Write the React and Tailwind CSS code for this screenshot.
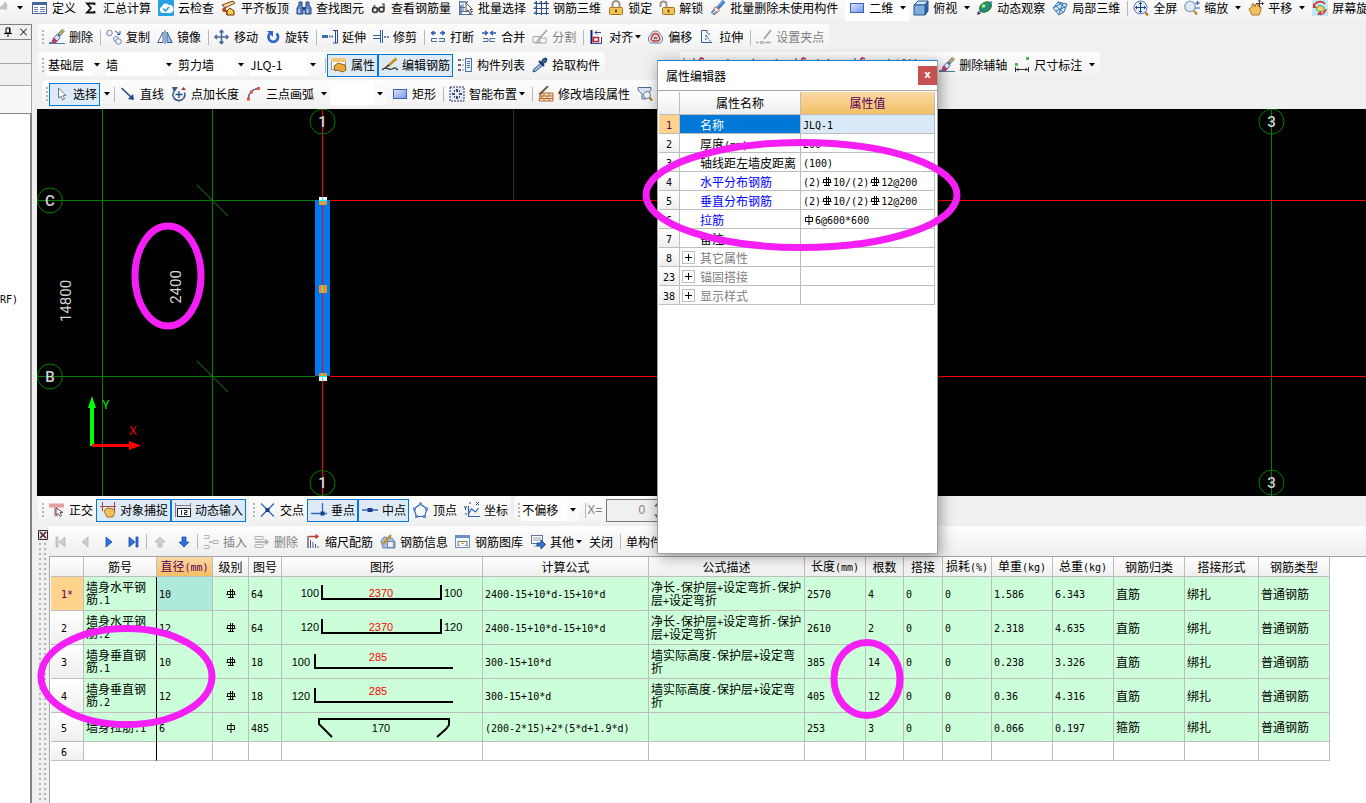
import React from "react";

const BLUE = "#2f5f9e";
const GREY = "#a8a8a8";

// 16x16 toolbar drawings
const ICONS = {
  define: (
    <>
      <rect x="0.500" y="2.500" width="14" height="11" fill="#fff" stroke="#44659c" />
      <path d="M0 2h15v3H0z" fill="#44659c" />
      <path d="M2 7.500h4M2 9.500h4M2 11.500h4M8 7.500h5M8 9.500h5M8 11.500h5" stroke="#6b86b5" />
    </>
  ),
  sum: <path d="M11.500 5V3.500H4L8 8l-4 4.500h7.500V11" fill="none" stroke="#111" strokeWidth="1.800" />,
  cloud: (
    <>
      <rect width="16" height="16" rx="1" fill="#2aa0e4" />
      <path d="M4 13a3.500 3.500 0 0 1 0-6.500A4 4 0 0 1 11 5a3.800 3.800 0 0 1 1 8z" fill="#fff" />
      <path d="M5 8.500l2.500 2.500L11 7" fill="none" stroke="#2aa0e4" strokeWidth="1.600" />
    </>
  ),
  slab: (
    <>
      <path d="M1 5l11-4 2 2L4 8z" fill="#f7d9a8" stroke="#7a3b12" />
      <path d="M1 9l4-3v4h8v5H5v-3H2z" fill="#b04a20" />
      <path d="M6 11l3-3 4 3v4H6z" fill="#ffd23f" stroke="#6e2b0c" />
    </>
  ),
  find: (
    <>
      <path d="M3 2h3v4l1 2v6H1V8l2-3zM10 2h3v3l2 3v6H9V8l1-2z" fill="#5d83c2" stroke="#25467e" />
      <path d="M6.500 7h3v3h-3z" fill="#25467e" />
      <path d="M3 9v4M11.500 9v4" stroke="#c8d9f3" strokeWidth="1.500" />
    </>
  ),
  glasses: (
    <>
      <circle cx="4" cy="10" r="2.500" fill="#dfe8f2" stroke="#333" strokeWidth="1.600" />
      <circle cx="10.500" cy="9.500" r="2.500" fill="#dfe8f2" stroke="#333" strokeWidth="1.600" />
      <path d="M6.500 9.500h1.500M1.500 9L4 5M13 8.500V4h-2" fill="none" stroke="#333" strokeWidth="1.200" />
    </>
  ),
  batch: (
    <>
      <path d="M1 1h9v2H1zM1 5h3v10H1z" fill="#7b93bd" />
      <path d="M1.500 1v14M5 4v8M1 7.500h6M1 11.500h14M1 14.500h14" stroke="#5a7199" />
      <path d="M8 3v9l2-2 2 4 1.500-1L12 9.500h2.500z" fill="#fff" stroke="#555" />
    </>
  ),
  rebar3d: <path d="M1 3.500h15M1 8.500h15M1 13.500h15M3.500 1v14M8.500 1v14M13.500 1v14M1 3.500L3.500 1M6 3.500L8.500 1M11 3.500L13.500 1M1 8.500l2.500-3M1 13.500l2.500-3" fill="none" stroke="#2c4d86" />,
  lock: (
    <>
      <path d="M4.500 8V4.500a3.500 3.500 0 0 1 7 0V8" fill="none" stroke="#9a958a" strokeWidth="2" />
      <rect x="1.500" y="7.500" width="13" height="7" rx="1" fill="#f2c45a" stroke="#a9751c" />
      <path d="M8 9.500v3" stroke="#5d3d08" strokeWidth="1.600" />
    </>
  ),
  unlock: (
    <>
      <path d="M1.500 7V4.500a3 3 0 0 1 6 0V8" fill="none" stroke="#9a958a" strokeWidth="2" />
      <rect x="3.500" y="7.500" width="12" height="7" rx="1" fill="#f2c45a" stroke="#a9751c" />
      <path d="M9.500 9.500v3" stroke="#5d3d08" strokeWidth="1.600" />
    </>
  ),
  brush: (
    <>
      <path d="M14.500 1L9 7" stroke="#3c6fb5" strokeWidth="3.400" />
      <path d="M14.500 1L10.500 5.500" stroke="#d9a640" strokeWidth="2.200" />
      <path d="M8 5.500l3 3-3 4-4-3z" fill="#dfe9f5" stroke="#4a6a99" />
      <path d="M5 8.500l3.500 3.500-1.500 2H4l-1.500-2z" fill="#b8397a" />
      <path d="M0 13.500h4M0 14.500h16" stroke="#5a779f" />
    </>
  ),
  broom: (
    <>
      <path d="M14 1L8 8" stroke="#3777c8" strokeWidth="3.500" />
      <path d="M13.500 1L9 6" stroke="#9cc3ee" />
      <path d="M5.500 6.500l4 4-5 4-3-2z" fill="#f4ece6" stroke="#c65a44" />
      <path d="M1 13l4-3M3 14.500l4-3" stroke="#4a8ad8" strokeWidth="1.400" />
    </>
  ),
  rect: (
    <>
      <defs>
        <linearGradient id="rectFill" x1="0" y1="0" x2="1" y2="1">
          <stop offset="0" stopColor="#dbe6fb" />
          <stop offset="1" stopColor="#7197ec" />
        </linearGradient>
      </defs>
      <rect x="1.500" y="3.500" width="13" height="9" fill="url(#rectFill)" stroke="#3f62b8" />
    </>
  ),
  cube: (
    <>
      <path d="M1 5l4-4h10l-3 4z" fill="#cfe2f7" stroke="#27548c" />
      <path d="M12 5l3-4v10l-3 4z" fill="#2c62a6" stroke="#27548c" />
      <path d="M1 5h11v10H1z" fill="#82aede" stroke="#27548c" />
    </>
  ),
  orbit: (
    <>
      <path d="M0 15l1-4 3 2.500z" fill="#5c2d2d" />
      <ellipse cx="8.500" cy="7" rx="6.500" ry="4.500" transform="rotate(-35 8.500 7)" fill="#27a04b" stroke="#146b2e" />
      <circle cx="6.500" cy="6" r="1.800" fill="#a8efb9" />
      <path d="M2 13c2-4 5-2 8-5s3-5 5-6.500" fill="none" stroke="#2e6fc0" strokeWidth="1.300" />
    </>
  ),
  part3d: (
    <>
      <path d="M1 8l5-6 9 2-3 8-5 3z" fill="#d5e7f7" stroke="#2e74b5" />
      <path d="M3.500 5.500l8 7M6 2l8 6M1 8l8-4.500M7 14l4-11M4 11l9-4" fill="none" stroke="#2e74b5" />
    </>
  ),
  full: (
    <>
      <circle cx="7.500" cy="7.500" r="6.500" fill="#e2ecfa" stroke="#5375ad" />
      <path d="M7.500 2.500v10M2.500 7.500h10M6 4l1.500-1.500L9 4M6 11l1.500 1.500L9 11M4 6L2.500 7.500 4 9M11 6l1.500 1.500L11 9" fill="none" stroke="#1f3f7d" />
      <path d="M12.500 12.500l2.500 3" stroke="#b87a2a" strokeWidth="2.500" />
    </>
  ),
  zoom: (
    <>
      <circle cx="6" cy="6.500" r="5.200" fill="#dfeaf6" stroke="#9aabc3" strokeWidth="1.500" />
      <path d="M10 11l3 3.500" stroke="#c08a3a" strokeWidth="2.500" />
      <path d="M13.500 1v4M11 3h5M11 8h5" stroke="#2d5fa6" strokeWidth="1.200" />
    </>
  ),
  pan: (
    <>
      <path d="M1 9l3-2V4h2l1 3 1-3h2l1 3h2v3l-2 5H4z" fill="#efc060" stroke="#a87422" />
      <path d="M11.500 0v7M8 3.500h7.500M10 1.500L11.500 0 13 1.500M14 2l1.500 1.500L14 5" fill="none" stroke="#444" />
    </>
  ),
  spin: (
    <>
      <rect width="16" height="16" fill="#bfe9f7" />
      <path d="M4 9l3-4 5 2v4l-5 1z" fill="#e7d36b" stroke="#5da05b" />
      <path d="M2 7a6.200 6.200 0 0 1 11-3M14 9a6.200 6.200 0 0 1-8 5" fill="none" stroke="#e0322c" strokeWidth="1.600" />
      <path d="M1 3v5h4zM9 11v4.500L5 14z" fill="#e0322c" />
    </>
  ),
  copy: (
    <>
      <circle cx="3.500" cy="4" r="2.800" fill="#eef2f8" stroke="#6d87ab" />
      <circle cx="10" cy="10" r="2.500" fill="#eef2f8" stroke="#6d87ab" />
      <circle cx="12.500" cy="12.500" r="2.800" fill="#eef2f8" stroke="#6d87ab" />
      <path d="M9 2l5 3M14 2v3.500h-3" fill="none" stroke={BLUE} />
    </>
  ),
  mirror: (
    <>
      <path d="M6 3v10.500H.800z" fill="#fff" stroke={BLUE} />
      <path d="M10 3v10.500h5.200z" fill="#9cbbe6" stroke={BLUE} />
      <path d="M8 1v14" stroke={BLUE} />
    </>
  ),
  move: (
    <path d="M7.500 1.500v13M1 8h13M5.500 3.500l2-2 2 2M5.500 12.500l2 2 2-2M3 6L1 8l2 2M12 6l2 2-2 2" fill="none" stroke="#4a6a9c" strokeWidth="1.600" />
  ),
  rotate: (
    <>
      <path d="M5 4.500a4.800 4.800 0 1 0 6.500 0" fill="none" stroke="#2f68c8" strokeWidth="2.800" />
      <path d="M2 2h6v6z" fill="#2f68c8" />
    </>
  ),
  extend: (
    <>
      <path d="M0 6h6v3H0z" fill="#3b6cae" />
      <path d="M7 7.500h5" stroke="#3b6cae" strokeWidth="2" strokeDasharray="1.500 1" />
      <path d="M13.500 1v13M15.500 1v13" stroke="#1f4f94" />
      <path d="M11 1.500h4.500M11 14h4.500" stroke="#1f4f94" />
    </>
  ),
  trim: (
    <>
      <path d="M0 6.500h7M0 9.500h7" stroke={BLUE} />
      <path d="M7.500 1v13M9.500 1v13" stroke={BLUE} />
      <path d="M11 8h5" stroke={BLUE} strokeWidth="1.500" strokeDasharray="2 1" />
    </>
  ),
  break: (
    <>
      <path d="M1 4h5M10 4h5M4 2L1.500 4 4 6M12 2l2.500 2L12 6" fill="none" stroke="#2c5bb5" strokeWidth="1.300" />
      <path d="M7 9.500H1.500v3H7M9 9.500h5.500v3H9" fill="none" stroke="#4a6a99" />
    </>
  ),
  merge: (
    <>
      <path d="M1 4h5M10 4h5M4 2l2.500 2L4 6M12 2L9.500 4 12 6" fill="none" stroke="#2c5bb5" strokeWidth="1.300" />
      <path d="M2 9.500h5v3H2M14 9.500H9v3h5" fill="none" stroke="#4a6a99" />
    </>
  ),
  split: (
    <>
      <path d="M1 7.500h7v6H1zM9 9h5v5H3" fill="none" stroke={GREY} />
      <path d="M15 1L7 10l-2 3" fill="none" stroke={GREY} strokeWidth="1.800" />
    </>
  ),
  align: (
    <>
      <path d="M2.500 1v14" stroke="#111f70" strokeWidth="2" />
      <path d="M6 3.500h6M8 1.500l-2 2 2 2" fill="none" stroke="#2c3fa8" />
      <path d="M4.500 8.500h5v4h-5z" fill="#fff" stroke="#c02030" strokeWidth="1.500" />
      <path d="M4 14.500h8.500V8" fill="none" stroke="#2c3fa8" />
    </>
  ),
  offset: (
    <>
      <path d="M7.500 2c4 0 4 3 6 5s1 7-2 7h-8c-3 0-4-5-2-7s2-5 6-5z" fill="#e8eef7" stroke="#5a779f" />
      <path d="M7.500 4.500c3 0 3 2 4 4s0 3.500-2 3.500h-4c-2 0-3-1.500-2-3.500s1-4 4-4z" fill="#f4cdc9" stroke="#c23a33" strokeWidth="1.400" />
      <path d="M5.500 10c0-3 4-3 4 0z" fill="#5a779f" />
    </>
  ),
  stretch: (
    <>
      <path d="M8 1.500H2.500v12H13M8 1.500v3" fill="none" stroke={BLUE} />
      <path d="M7 6l5 7M7 6v6M9 5h2" fill="none" stroke={BLUE} strokeDasharray="2 1" />
    </>
  ),
  grip: (
    <>
      <path d="M0 13.500h3M9 13.500h6" stroke={GREY} strokeWidth="1.500" />
      <path d="M4 12h4v3H4z" fill="#bdbdbd" />
      <path d="M15 1L8 10" stroke={GREY} strokeWidth="2" />
    </>
  ),
  props: (
    <>
      <rect x="0.500" y="1.500" width="14" height="11" fill="#fff" stroke="#8e98a8" />
      <path d="M0 1h15v4H0z" fill="#f2c879" />
      <path d="M3 9l4-3 7 2 1 5-4 2-4-2-3 1z" fill="#e7a93c" stroke="#8c6018" />
    </>
  ),
  editRebar: (
    <>
      <path d="M0 13c4-5 6 1 10-1s3-1 6 1" fill="none" stroke="#333" strokeWidth="1.300" />
      <path d="M14.500 1.500L6 9" stroke="#c98f2c" strokeWidth="2.800" />
      <path d="M7 8l-4 3" stroke="#333" strokeWidth="1.500" />
    </>
  ),
  list: (
    <>
      <path d="M1 2h3v2H1zM1 7h3v2H1zM1 12h3v2H1z" fill="#667" />
      <path d="M5 3h2M5 8h2M5 13h2" stroke="#889" />
      <rect x="8.500" y="1.500" width="6" height="13" fill="#e8f0fb" stroke="#4e77ba" />
      <path d="M10 4.500h3M10 6.500h3M10 8.500h3M10 10.500h3" stroke="#4e77ba" />
    </>
  ),
  pick: (
    <>
      <path d="M9 6l-7 6-1 3 3-1 7-6" fill="#8fc0ee" stroke="#31547f" />
      <path d="M7 4l5 5" stroke="#16335c" strokeWidth="2.200" />
      <path d="M9 6l2-4 3-1 1 1-1 3-4 2z" fill="#2f63b5" stroke="#16335c" />
    </>
  ),
  cursor: <path d="M5.500 2v10l2.500-2 1.500 4 2-1-1.500-3.500h3z" fill="#fff" stroke="#6d7b8e" />,
  line: (
    <>
      <path d="M1.500 2l10 9.500" stroke="#23478a" strokeWidth="1.600" />
      <path d="M14 14l-6-1 5-5z" fill="#23478a" />
    </>
  ),
  addLen: (
    <>
      <path d="M2.500 6a6 6 0 1 0 11 .500" fill="none" stroke="#3b5b8c" strokeWidth="1.600" />
      <path d="M1 1h6l-4 6z" fill="#3b5b8c" />
      <path d="M8 5v7M4.500 8.500h7" stroke="#23478a" strokeWidth="1.300" />
      <path d="M10 4h5l-2.500-3z" fill="#a33" />
    </>
  ),
  arc: (
    <>
      <path d="M2.500 14C2 7 6 3 13 2.500" fill="none" stroke="#6b5f8a" strokeWidth="1.500" />
      <path d="M1 11.500h3v3H1zM4 4.500h3v3H4zM11 1h3v3h-3z" fill="#df5a3e" />
    </>
  ),
  smart: (
    <>
      <rect x="1" y="1" width="14" height="14" fill="#dfe9fa" stroke="#334" strokeDasharray="2 1" />
      <path d="M8 3v3M8 10v3M3 8h3M10 8h3M5 5h1M10 5h1M5 11h1M10 11h1" stroke="#223" strokeWidth="1.600" />
    </>
  ),
  wall: (
    <>
      <path d="M3 7h12v8H1z" fill="#fbe3cb" stroke="#b5692e" />
      <path d="M1 10h14M1 12.500h14M6 7v3M11 7v3M4 10v2.500M9 10v2.500M6 12.500V15M11 12.500V15" stroke="#b5692e" />
      <path d="M10 0L3 7l-2 1" fill="none" stroke="#5d5a3c" strokeWidth="1.800" />
    </>
  ),
  filter: (
    <>
      <path d="M1 1.500h13v3L9 8v5H5V8L1 4z" fill="#d8e4f5" stroke="#4e6b9b" />
      <circle cx="10" cy="9" r="3.500" fill="#eef5fc" stroke="#6b7f9c" />
      <path d="M12.500 11.500l2.500 3" stroke="#b87a2a" strokeWidth="2.400" />
    </>
  ),
  axis: <path d="M2 14L13 2M2 5h12" stroke="#2d3f9c" strokeWidth="1.200" />,
  axisRed: (
    <>
      <path d="M4 1v14" stroke="#2d3f9c" />
      <path d="M8 5l3-4 3 1" fill="none" stroke="#b03040" strokeWidth="1.500" />
    </>
  ),
  dim: (
    <>
      <path d="M1 6h3v3H1zM12 0h3v3h-3z" fill="#4fb85a" />
      <path d="M1.500 10v5M14.500 10v5M2 12.500h12M4 11v3M12 11v3" stroke="#333" />
    </>
  ),
  ortho: (
    <>
      <path d="M0 1.500h15v4H9v9H5v-9H0z" fill="#e2a0a0" />
      <path d="M7 6v7l2-1.500 2 3 1.500-1L11 10.500h3z" fill="#fff" stroke="#555" />
    </>
  ),
  snap: (
    <>
      <path d="M2.500 0v9M14.500 0v9M0 4.500h16" stroke="#a34a3c" />
      <path d="M4 9l3-3 6 1 2 3-2 5H7z" fill="#efc060" stroke="#a87422" />
    </>
  ),
  dyn: (
    <>
      <path d="M.500 1v14M15.500 1v4M1 3.500h14" stroke="#8d7a7a" />
      <rect x="2.500" y="6.500" width="13" height="8" fill="#fff" stroke="#222" />
      <path d="M6.500 8v5M9 8.500h3v2H9.500v2h3" fill="none" stroke="#222" />
    </>
  ),
  cross: (
    <>
      <path d="M1 1.500l13 13M14 1.500l-13 13" stroke="#2f68b8" strokeWidth="1.300" />
      <path d="M5.500 6h4v4h-4z" fill="#153f86" />
    </>
  ),
  perp: (
    <>
      <path d="M11.500 1v10M0 11.500h16" stroke="#2f68b8" strokeWidth="1.300" />
      <path d="M9.500 9.500h4v4h-4z" fill="#153f86" />
    </>
  ),
  mid: (
    <>
      <path d="M0 8h16" stroke="#2f68b8" strokeWidth="1.500" />
      <path d="M5.500 6h5v4h-5z" fill="#153f86" />
    </>
  ),
  vertex: (
    <>
      <path d="M7.500 2L14 7l-2.500 7.500h-8L1 7z" fill="#fff" stroke="#2f68b8" strokeWidth="1.200" />
      <path d="M6 .500h3v3H6zM0 5.500h3v3H0zM12 5.500h3v3h-3zM2 13h3v3H2zM10 13h3v3h-3z" fill="#5b90d6" />
    </>
  ),
  coord: (
    <>
      <path d="M4.500 4v10.500H16M4.500 12l3-5 4 3 3-4" fill="none" stroke="#2f68b8" strokeWidth="1.200" />
      <path d="M0 4l1.500 2L3 4M1.500 6v2M12 0l3 3M15 0l-3 3M1 12h2M6 0v2" fill="none" stroke="#23478a" />
    </>
  ),
  insert: (
    <>
      <path d="M1 1.500h5v3H1M1 11.500h5v3H1M10 6.500h5v3h-5z" fill="#f2f2f2" stroke="#b5b5b5" />
      <path d="M9 8H6" stroke={GREY} strokeWidth="1.500" />
    </>
  ),
  remove: (
    <>
      <path d="M1 2.500h8v3H1zM1 10.500h8v3H1z" fill="#f2f2f2" stroke="#b5b5b5" />
      <path d="M1 8h12M11 5.500L14 8l-3 2.500" fill="none" stroke={GREY} strokeWidth="1.300" />
    </>
  ),
  scale: (
    <>
      <path d="M3 2v12" stroke="#222" />
      <path d="M4 2.500h9M10.500.500l2.500 2-2.500 2" fill="none" stroke="#c0392b" strokeWidth="1.300" />
      <path d="M5.500 6v8M8 8v6M10.500 10v4M13 12v2" stroke="#4a5f86" />
    </>
  ),
  info: (
    <>
      <path d="M1 7l3-4 8 1 3 4v6H3z" fill="#a9bfe2" stroke="#6a86b8" />
      <rect x="7.500" y="7.500" width="6" height="6" fill="#eef3fb" stroke="#6a86b8" />
      <path d="M11 1L3 10" stroke="#c98f2c" strokeWidth="2.500" />
    </>
  ),
  gallery: (
    <>
      <rect x="0.500" y="1.500" width="14" height="12" fill="#f4f8fd" stroke="#6b8fc9" />
      <path d="M0 1h15v3H0z" fill="#6b8fc9" />
      <path d="M3 11V7.500h9V11M2.500 11.500h2M10.500 11.500h2" fill="none" stroke="#777" />
      <path d="M6 9.500h3" stroke="#d9a640" />
    </>
  ),
  other: (
    <>
      <rect x="1.500" y="1.500" width="11" height="8" fill="#fff" stroke="#65748f" />
      <path d="M3 4h8M3 6h8M4 12h4" stroke="#8a99b5" />
      <path d="M7 9h4V6l4.500 4.500L11 15v-3H7z" fill="#3873cf" stroke="#1e4c97" />
    </>
  ),
};

const Icon = ({ name }) => (
  <svg width="16" height="16" viewBox="0 0 16 16" className="shrink-0" aria-hidden="true">
    {ICONS[name]}
  </svg>
);

const Caret = () => (
  <svg width="6" height="4" viewBox="0 0 6 4" className="shrink-0" aria-hidden="true">
    <path d="M0 0h6L3 3.500z" fill="#000" />
  </svg>
);

const Tool = ({ icon, label, active, disabled, menu }) => (
  <button
    type="button"
    disabled={disabled}
    className={
      "flex h-[23px] shrink-0 items-center gap-1 border pl-[3px] pr-0.5 whitespace-nowrap " +
      (active ? "border-[#0078d7] bg-[#deebf7] " : "border-transparent ") +
      (disabled ? "text-[#808080]" : "text-black")
    }
  >
    {icon && <Icon name={icon} />}
    <span className="flex items-center gap-0.5">
      {label}
      {menu && <Caret />}
    </span>
  </button>
);

const Drop = ({ label }) => (
  <button type="button" aria-label={label} className="flex h-[23px] shrink-0 items-center pl-1 pr-[3px]">
    <Caret />
  </button>
);

const Sep = () => <span className="ml-1 mr-px h-[15px] w-px shrink-0 bg-[#b8b8b8]" />;

const Grip = () => (
  <span className="flex shrink-0 flex-col gap-0.5 pr-px" aria-hidden="true">
    <i className="size-0.5 bg-[#b5b5b5]" />
    <i className="size-0.5 bg-[#b5b5b5]" />
    <i className="size-0.5 bg-[#b5b5b5]" />
    <i className="size-0.5 bg-[#b5b5b5]" />
  </span>
);

const Bar = ({ children, className = "" }) => (
  <div
    className={
      "flex h-full shrink-0 items-center rounded-sm bg-linear-to-b from-[#fdfdfd] to-[#f1f1f1] pl-1 " + className
    }
  >
    <Grip />
    {children}
  </div>
);

const Select = ({ label, value, width }) => (
  <div className={"relative mr-0.5 flex h-[22px] shrink-0 items-center bg-white " + width}>
    <select aria-label={label} className="h-full w-full appearance-none bg-transparent pl-px pr-3 text-xs outline-none">
      <option>{value}</option>
    </select>
    <span className="pointer-events-none absolute inset-y-0 right-0 flex w-3 items-center justify-center bg-[#fafafa]">
      <Caret />
    </span>
  </div>
);

// Grade symbol of a bar: HRB400 has the double stem and base, HPB300 the single one
const Grade = ({ level }) => (
  <svg
    width="12"
    height="12"
    viewBox="0 0 12 12"
    className="inline-block align-[-2px]"
    role="img"
    aria-label={level === 3 ? "HRB400" : "HPB300"}
  >
    {level === 3 ? (
      <path d="M2.500 3.500h7v3h-7zM5.500 1v9M7.500 1v9M1.500 6.500h9M3 9.500h6" fill="none" stroke="#000" />
    ) : (
      <path d="M2.500 3.500h7v4h-7zM6 1v10" fill="none" stroke="#000" />
    )}
  </svg>
);

// Half-width characters go in the mono face, Chinese in the full-width one; # and $ stand for bar grades
const Mixed = ({ text }) =>
  text.split(/([\u4e00-\u9fff]+|[#$])/).map((part, i) => {
    if (part === "#") return <Grade key={i} level={3} />;
    if (part === "$") return <Grade key={i} level={1} />;
    if (part === "" || /[\u4e00-\u9fff]/.test(part)) return part;
    return (
      <span key={i} className="font-['DejaVu_Sans_Mono','Liberation_Mono',monospace] text-[10px] leading-none">
        {part}
      </span>
    );
  });

const Bubble = ({ x, y, label }) => (
  <>
    <circle cx={x} cy={y} r="12.500" fill="none" stroke="#008000" />
    <text x={x} y={y + 5} textAnchor="middle" fontSize="15" fontWeight="500" fill="#d4d4d4">
      {label}
    </text>
  </>
);

const Drawing = () => (
  <svg
    className="block h-[387px] w-full bg-black font-[Roboto,sans-serif]"
    role="img"
    aria-label="绘图区"
  >
    <g stroke="#008000" shapeRendering="crispEdges">
      <path d="M65.500 0v387M175.500 0v387M1234.500 0v387" />
      <path d="M0 91.500h278M0 267.500h278" />
      <path d="M160 76l31 31M160 252l31 31" />
    </g>
    <path d="M476.500 0v91" stroke="#262e26" />
    <rect x="278" y="91" width="15" height="176" fill="#0078f0" />
    <g stroke="#f00" shapeRendering="crispEdges">
      <path d="M285.500 0v387" />
      <line x1="293" y1="91.500" x2="100%" y2="91.500" />
      <line x1="293" y1="267.500" x2="100%" y2="267.500" />
    </g>
    <path d="M282 88h8v4h-8zM282 268h8v4h-8z" fill="#fff" />
    <path d="M282 92h8v4h-8zM282 264h8v4h-8zM282 176h8v8h-8z" fill="#ff8c1a" />
    <path d="M285.500 88v8M285.500 176v8M285.500 264v8M282 91.500h8M282 267.500h8" stroke="#0ff" />
    <Bubble x={285.5} y={12.5} label="1" />
    <Bubble x={285.5} y={374} label="1" />
    <Bubble x={13} y={91.5} label="C" />
    <Bubble x={13} y={267.5} label="B" />
    <Bubble x={1234.5} y={12.5} label="3" />
    <Bubble x={1234.5} y={373.5} label="3" />
    <g fontSize="15" fill="#d4d4d4" textAnchor="middle">
      <text transform="translate(34 192) rotate(-90)">14800</text>
      <text transform="translate(144 178) rotate(-90)">2400</text>
    </g>
    <path d="M53 337V299h-2l4-12 4 12h-2v38z" fill="#0f0" />
    <path d="M55 335h37v-3l12 4.500-12 4.500v-3H55z" fill="#f00" />
    <g fontSize="13" textAnchor="middle" className="font-['Open_Sans',sans-serif]">
      <text x="69" y="300" fill="#0f0">Y</text>
      <text x="96" y="326" fill="#f00">X</text>
    </g>
  </svg>
);

const UShape = ({ left, length, right }) => (
  <svg width="200" height="32" viewBox="0 0 200 32" className="block" role="img" aria-label={`${left} ${length} ${right}`}>
    <path d="M40 7v14h119V7" fill="none" stroke="#000" strokeWidth="2" />
    <g fontSize="11">
      <text x="37" y="19" textAnchor="end">{left}</text>
      <text x="99" y="19" textAnchor="middle" fill="#f00">{length}</text>
      <text x="162" y="19">{right}</text>
    </g>
  </svg>
);

const LShape = ({ left, length }) => (
  <svg width="200" height="32" viewBox="0 0 200 32" className="block" role="img" aria-label={`${left} ${length}`}>
    <path d="M33 8v14h138" fill="none" stroke="#000" strokeWidth="2" />
    <g fontSize="11">
      <text x="28" y="20" textAnchor="end">{left}</text>
      <text x="96" y="15" textAnchor="middle" fill="#f00">{length}</text>
    </g>
  </svg>
);

const TieShape = ({ length }) => (
  <svg width="200" height="28" viewBox="0 0 200 28" className="block" role="img" aria-label={length}>
    <path d="M50 24L37 11v-5h130V12l-3 4-9 8" fill="none" stroke="#000" strokeWidth="2" />
    <text x="99" y="19" textAnchor="middle" fontSize="11">{length}</text>
  </svg>
);

const COLUMNS = [
  ["", "w-[33px]"],
  ["筋号", "w-[73px]"],
  ["直径(mm)", "w-[56px]"],
  ["级别", "w-[36px]"],
  ["图号", "w-[33px]"],
  ["图形", "w-[201px]"],
  ["计算公式", "w-[166px]"],
  ["公式描述", "w-[156px]"],
  ["长度(mm)", "w-[61px]"],
  ["根数", "w-[38px]"],
  ["搭接", "w-[39px]"],
  ["损耗(%)", "w-[49px]"],
  ["单重(kg)", "w-[61px]"],
  ["总重(kg)", "w-[61px]"],
  ["钢筋归类", "w-[71px]"],
  ["搭接形式", "w-[74px]"],
  ["钢筋类型", "w-[71px]"],
];

const ROWS = [
  ["1*", "墙身水平钢筋.1", "10", "#", "64", <UShape left="100" length="2370" right="100" />, "2400-15+10*d-15+10*d", "净长-保护层+设定弯折-保护层+设定弯折", "2570", "4", "0", "0", "1.586", "6.343", "直筋", "绑扎", "普通钢筋"],
  ["2", "墙身水平钢筋.2", "12", "#", "64", <UShape left="120" length="2370" right="120" />, "2400-15+10*d-15+10*d", "净长-保护层+设定弯折-保护层+设定弯折", "2610", "2", "0", "0", "2.318", "4.635", "直筋", "绑扎", "普通钢筋"],
  ["3", "墙身垂直钢筋.1", "10", "#", "18", <LShape left="100" length="285" />, "300-15+10*d", "墙实际高度-保护层+设定弯折", "385", "14", "0", "0", "0.238", "3.326", "直筋", "绑扎", "普通钢筋"],
  ["4", "墙身垂直钢筋.2", "12", "#", "18", <LShape left="120" length="285" />, "300-15+10*d", "墙实际高度-保护层+设定弯折", "405", "12", "0", "0", "0.36", "4.316", "直筋", "绑扎", "普通钢筋"],
  ["5", "墙身拉筋.1", "6", "$", "485", <TieShape length="170" />, "(200-2*15)+2*(5*d+1.9*d)", "", "253", "3", "0", "0", "0.066", "0.197", "箍筋", "绑扎", "普通钢筋"],
  ["6", "", "", "", "", "", "", "", "", "", "", "", "", "", "", "", ""],
];

const ROW_HEIGHTS = ["h-[34px]", "h-[34px]", "h-[34px]", "h-[34px]", "h-[29px]", "h-[19px]"];

const bodyCell = (r, c) => {
  let cls = "overflow-hidden border-b border-r border-b-[#bdbdbd] p-0 align-middle ";
  cls += c === 1 ? "border-r-black " : "border-r-[#bdbdbd] ";
  if (c === 0) {
    cls += "pl-2.5 text-left font-normal ";
    return cls + (r === 0 ? "bg-[#ffd38c] text-[#5a005a]" : "bg-linear-to-b from-white to-[#efefef]");
  }
  if (c === 3) cls += "text-center ";
  else if (c !== 5) cls += "pl-0.5 ";
  if (r === 0 && c === 2) return cls + "bg-[#aeeada]";
  return cls + (r < 5 ? "bg-[#ccffd9]" : "bg-white");
};

const RebarTable = () => (
  <table className="w-[1279px] table-fixed border-separate border-spacing-0 text-xs leading-3">
    <thead>
      <tr className="h-5">
        {COLUMNS.map(([name, width], c) => (
          <th
            key={c}
            scope="col"
            className={
              "border-b border-r border-[#bdbdbd] p-0 text-center font-normal whitespace-nowrap " +
              width +
              (c === 2
                ? " bg-linear-to-b from-[#f9d9a4] to-[#f3bf63] text-[#5a005a]"
                : " bg-linear-to-b from-white to-[#efefef]")
            }
          >
            <Mixed text={name} />
          </th>
        ))}
      </tr>
    </thead>
    <tbody>
      {ROWS.map((row, r) => (
        <tr key={r} className={ROW_HEIGHTS[r]}>
          {row.map((cell, c) => {
            const Cell = c === 0 ? "th" : "td";
            return (
              <Cell key={c} scope={c === 0 ? "row" : undefined} className={bodyCell(r, c)}>
                {typeof cell === "string" ? <Mixed text={cell} /> : <div className="font-['Liberation_Sans',sans-serif]">{cell}</div>}
              </Cell>
            );
          })}
        </tr>
      ))}
    </tbody>
  </table>
);

const PROPS = [
  { no: "1", name: "名称", value: "JLQ-1" },
  { no: "2", name: "厚度(mm)", value: "200" },
  { no: "3", name: "轴线距左墙皮距离", value: "(100)" },
  { no: "4", name: "水平分布钢筋", value: "(2)#10/(2)#12@200", key: true },
  { no: "5", name: "垂直分布钢筋", value: "(2)#10/(2)#12@200", key: true },
  { no: "6", name: "拉筋", value: "$6@600*600", key: true },
  { no: "7", name: "备注", value: "" },
  { no: "8", name: "其它属性", value: "", group: true },
  { no: "23", name: "锚固搭接", value: "", group: true },
  { no: "38", name: "显示样式", value: "", group: true },
];

const propColor = (p, i) => {
  if (i === 0) return "bg-[#0078d7] text-white";
  if (p.key) return "text-[#0000ff]";
  if (p.group) return "text-[#808080]";
  return "text-black";
};

const PropertyEditor = () => (
  <section
    aria-label="属性编辑器"
    className="absolute left-[657px] top-[60px] flex h-[494px] w-[281px] flex-col border border-[#a0a0a0] border-t-[#1883d7] bg-white shadow-[2px_3px_14px_rgba(0,0,0,0.4)]"
  >
    <header className="flex h-[30px] shrink-0 items-center justify-between border-b border-[#a8a8a8] pl-2">
      <h2>属性编辑器</h2>
      <button
        type="button"
        aria-label="关闭"
        className="size-[19px] bg-[#c75050] pb-0.5 font-['DejaVu_Sans',sans-serif] text-[10px] font-bold text-white"
      >
        x
      </button>
    </header>
    <table className="ml-px mt-px w-[276px] table-fixed border-separate border-spacing-0 leading-3">
      <thead>
        <tr className="h-[23px]">
          <th className="w-[21px] border-b border-r border-[#bdbdbd] bg-linear-to-b from-white to-[#efefef] p-0" />
          <th scope="col" className="w-[121px] border-b border-r border-[#bdbdbd] bg-linear-to-b from-white to-[#efefef] p-0 font-normal">
            属性名称
          </th>
          <th scope="col" className="border-b border-r border-[#bdbdbd] bg-linear-to-b from-[#f9d9a4] to-[#f3bf63] p-0 font-normal text-[#5a005a]">
            属性值
          </th>
        </tr>
      </thead>
      <tbody>
        {PROPS.map((p, i) => (
          <tr key={p.no} className="h-[19px]">
            <th
              scope="row"
              className={
                "border-b border-r border-[#bdbdbd] p-0 text-center font-normal " +
                (i === 0 ? "bg-[#ffd38c] text-[#5a005a]" : "bg-linear-to-b from-white to-[#efefef]")
              }
            >
              <Mixed text={p.no} />
            </th>
            <td className={"border-b border-r border-[#bdbdbd] p-0 whitespace-nowrap " + propColor(p, i)}>
              <div className="flex items-center">
                <span className="flex w-5 shrink-0 items-center pl-0.5">
                  {p.group && (
                    <button type="button" aria-label={"展开" + p.name} className="flex size-[13px] items-center justify-center border border-[#bdbdbd]">
                      <svg width="7" height="7" viewBox="0 0 7 7">
                        <path d="M3.500 0v7M0 3.500h7" stroke="#000" />
                      </svg>
                    </button>
                  )}
                </span>
                <span className="pt-0.5"><Mixed text={p.name} /></span>
              </div>
            </td>
            <td className={"border-b border-r border-[#bdbdbd] py-0 pl-0.5 pr-0 whitespace-nowrap " + (i === 0 ? "bg-[#d9e9f7]" : "")}>
              <Mixed text={p.value} />
            </td>
          </tr>
        ))}
      </tbody>
    </table>
  </section>
);

const NavButton = ({ label, path, off }) => (
  <button type="button" aria-label={label} disabled={off} className="flex h-6 w-6 shrink-0 items-center justify-center">
    <svg width="12" height="12" viewBox="0 0 12 12">
      <path d={path} fill={off ? "#cfcfcf" : "#2f6fe0"} stroke={off ? "#b5b5b5" : "#1e4fae"} strokeWidth="0.800" />
    </svg>
  </button>
);

const NavSep = () => <span className="mx-px h-[15px] w-px shrink-0 bg-[#b8b8b8]" />;

const MainBar = () => (
  <div className="-mt-[5px] mb-[3px] flex h-[26px] shrink-0 items-center bg-linear-to-b from-[#fdfdfd] to-[#f1f1f1]">
    <div className="flex w-7 shrink-0 items-center gap-[9px]">
      <svg width="8" height="12" viewBox="0 0 8 12" aria-hidden="true">
        <path d="M0 5l4-3V0l3 1v7l-6-1 2-2-3 3z" fill="#c4c4c4" />
      </svg>
      <Caret />
    </div>
    <Tool icon="define" label="定义" />
    <Tool icon="sum" label="汇总计算" />
    <Tool icon="cloud" label="云检查" />
    <Tool icon="slab" label="平齐板顶" />
    <Tool icon="find" label="查找图元" />
    <Tool icon="glasses" label="查看钢筋量" />
    <Tool icon="batch" label="批量选择" />
    <Tool icon="rebar3d" label="钢筋三维" />
    <Tool icon="lock" label="锁定" />
    <Tool icon="unlock" label="解锁" />
    <Tool icon="broom" label="批量删除未使用构件" />
    <div className="ml-1 flex h-full items-center bg-white">
      <Tool icon="rect" label="二维" />
      <Drop label="二维选项" />
    </div>
    <Tool icon="cube" label="俯视" />
    <Drop label="俯视选项" />
    <Tool icon="orbit" label="动态观察" />
    <Tool icon="part3d" label="局部三维" />
    <Sep />
    <Tool icon="full" label="全屏" />
    <Tool icon="zoom" label="缩放" />
    <Drop label="缩放选项" />
    <Tool icon="pan" label="平移" />
    <Drop label="平移选项" />
    <Tool icon="spin" label="屏幕旋转" />
  </div>
);

const EditBar = () => (
  <div className="flex h-[26px]">
    <Bar className="pr-0.5">
      <Tool icon="brush" label="删除" />
      <Sep />
      <Tool icon="copy" label="复制" />
      <Tool icon="mirror" label="镜像" />
      <Sep />
      <Tool icon="move" label="移动" />
      <Tool icon="rotate" label="旋转" />
      <Sep />
      <Tool icon="extend" label="延伸" />
      <Tool icon="trim" label="修剪" />
      <Sep />
      <Tool icon="break" label="打断" />
      <Tool icon="merge" label="合并" />
      <Tool icon="split" label="分割" disabled />
      <Sep />
      <Tool icon="align" label="对齐" menu />
      <Tool icon="offset" label="偏移" />
      <Tool icon="stretch" label="拉伸" />
      <Sep />
      <Tool icon="grip" label="设置夹点" disabled />
    </Bar>
  </div>
);

const ComponentBar = () => (
  <div className="flex h-[26px]">
    <Bar className="pr-0.5">
      <span className="w-0.5" />
      <Select label="楼层" value="基础层" width="w-[56px]" />
      <Select label="构件类型" value="墙" width="w-[70px]" />
      <Select label="构件类别" value="剪力墙" width="w-[70px]" />
      <Select label="构件" value="JLQ-1" width="w-[70px]" />
      <Sep />
      <Tool icon="props" label="属性" active />
      <Tool icon="editRebar" label="编辑钢筋" active />
      <Tool icon="list" label="构件列表" />
      <Tool icon="pick" label="拾取构件" />
    </Bar>
    <Bar className="ml-[74px] pr-0.5">
      <Tool icon="axisRed" label="两点" />
      <Tool icon="axis" label="平行" />
      <Tool icon="axisRed" label="点角" menu />
      <Tool icon="axisRed" label="三点辅轴" />
      <Drop label="三点辅轴选项" />
      <Tool icon="brush" label="删除辅轴" />
      <Tool icon="dim" label="尺寸标注" />
      <Drop label="尺寸标注选项" />
    </Bar>
  </div>
);

const DrawBar = () => (
  <div className="flex h-7 pl-1">
    <Bar className="pr-0.5">
      <Tool icon="cursor" label="选择" active />
      <Drop label="选择选项" />
      <NavSep />
      <Tool icon="line" label="直线" />
      <Tool icon="addLen" label="点加长度" />
      <Tool icon="arc" label="三点画弧" />
      <Drop label="三点画弧选项" />
      <Select label="绘制参数" value="" width="w-[56px]" />
      <Tool icon="rect" label="矩形" />
      <Sep />
      <Tool icon="smart" label="智能布置" menu />
      <Sep />
      <Tool icon="wall" label="修改墙段属性" />
      <Tool icon="filter" label="" />
    </Bar>
  </div>
);

const SnapBar = () => (
  <div className="flex h-[30px] gap-[3px] pb-0.5 pl-px">
    <Bar>
      <Tool icon="ortho" label="正交" />
      <Tool icon="snap" label="对象捕捉" active />
      <Tool icon="dyn" label="动态输入" active />
    </Bar>
    <Bar>
      <Tool icon="cross" label="交点" />
      <Tool icon="perp" label="垂点" active />
      <Tool icon="mid" label="中点" active />
      <Tool icon="vertex" label="顶点" />
      <Tool icon="coord" label="坐标" />
    </Bar>
    <Bar>
      <Select label="偏移方式" value="不偏移" width="w-[58px]" />
      <Sep />
      <label htmlFor="offset-x" className="pr-1 font-['Liberation_Sans',sans-serif] text-[#808080]">X=</label>
      <div className="relative flex">
        <input
          id="offset-x"
          defaultValue="0"
          className="h-[23px] w-[60px] border border-[#7a7a7a] bg-[#f0f0f0] pr-5 text-right font-['Liberation_Sans',sans-serif] text-xs text-[#808080]"
        />
        <svg width="6" height="15" viewBox="0 0 6 15" className="absolute right-1.5 top-1" aria-hidden="true">
          <path d="M0 3.500h6L3 0zM0 11.500h6L3 15z" fill="#666" />
        </svg>
      </div>
    </Bar>
  </div>
);

const RebarBar = () => (
  <div className="flex h-[31px] shrink-0 items-center border-b border-[#a5a5ad] bg-linear-to-b from-[#fdfdfd] to-[#efefef] pt-px">
    <NavButton label="第一条" off path="M1 1h2v10H1zM10 1v10L4 6z" />
    <NavButton label="上一条" off path="M9 1v10L3 6z" />
    <NavButton label="下一条" path="M3 1v10l6-5z" />
    <NavButton label="最后一条" path="M2 1v10l6-5zM9 1h2v10H9z" />
    <NavSep />
    <NavButton label="上移" off path="M6 1l5 5H8v5H4V6H1z" />
    <NavButton label="下移" path="M6 11l5-5H8V1H4v5H1z" />
    <NavSep />
    <Tool icon="insert" label="插入" disabled />
    <Tool icon="remove" label="删除" disabled />
    <Tool icon="scale" label="缩尺配筋" />
    <Tool icon="info" label="钢筋信息" />
    <Tool icon="gallery" label="钢筋图库" />
    <Tool icon="other" label="其他" menu />
    <Tool label="关闭" />
    <Sep />
    <Tool label="单构件输入法" />
  </div>
);

const SidePanel = () => (
  <aside className="flex w-8 shrink-0 flex-col">
    <div className="flex h-4 items-center gap-2 border border-l-0 border-[#808088] pl-1">
      <svg width="8" height="10" viewBox="0 0 8 10" className="shrink-0" role="img" aria-label="固定">
        <path d="M2 1h4v5H2zM0 6.500h8M4 7v3M5.500 1v5" fill="none" stroke="#000" />
      </svg>
      <svg width="7" height="8" viewBox="0 0 7 8" className="shrink-0" role="img" aria-label="关闭">
        <path d="M0 .500l7 7M7 .500l-7 7" stroke="#000" />
      </svg>
    </div>
    <div className="h-6 border-b border-r border-[#a8a8a8] bg-[#f0f0f0]" />
    <div className="h-[22px] border-b border-r border-[#a8a8a8] bg-[#f0f0f0]" />
    <div className="h-[27px] border-r border-[#a8a8a8] bg-[#f8f8f8]" />
    <div className="flex-1 border-r-2 border-t border-[#82828a] bg-white pt-44 leading-4">
      <Mixed text="RF)" />
    </div>
  </aside>
);

const Marks = () => (
  <svg className="pointer-events-none absolute inset-0 h-full w-full" aria-hidden="true">
    <g fill="none" stroke="#f51ef5" strokeWidth="7">
      <ellipse cx="168" cy="276" rx="33" ry="50" />
      <ellipse cx="801.500" cy="195" rx="155.500" ry="52.500" />
      <ellipse cx="126.500" cy="676.500" rx="85.500" ry="48" />
      <ellipse cx="867" cy="679" rx="33" ry="36.500" />
    </g>
  </svg>
);

export default function App() {
  return (
    <div className="relative flex min-h-screen flex-col overflow-hidden bg-[#f0f0f0] font-['Noto_Sans_CJK_SC',sans-serif] text-xs leading-4 text-black">
      <MainBar />
      <div className="flex flex-1">
        <SidePanel />
        <main className="flex min-w-0 flex-1 flex-col pl-[5px]">
          <div className="flex flex-col gap-0.5 pb-px pl-px">
            <EditBar />
            <ComponentBar />
            <DrawBar />
          </div>
          <Drawing />
          <SnapBar />
          <div className="flex flex-1">
            <div className="flex w-3 shrink-0 flex-col pl-px pt-1">
              <svg width="10" height="10" viewBox="0 0 10 10" role="img" aria-label="关闭">
                <path d="M.500.500h9v9h-9z" fill="#e8dede" stroke="#2a2a3c" />
                <path d="M2 2l6 6M8 2L2 8" stroke="#5a1e28" strokeWidth="1.500" />
              </svg>
              <div className="mt-0.5 flex-1 bg-[radial-gradient(circle_at_2px_2px,#b5b5b5_1px,transparent_1.500px)] bg-size-[5px_5px]" />
            </div>
            <div className="flex min-w-0 flex-1 flex-col">
              <RebarBar />
              <div className="flex-1 overflow-hidden border-l border-[#a5a5ad] bg-white pl-px">
                <RebarTable />
              </div>
            </div>
          </div>
        </main>
      </div>
      <PropertyEditor />
      <Marks />
    </div>
  );
}
